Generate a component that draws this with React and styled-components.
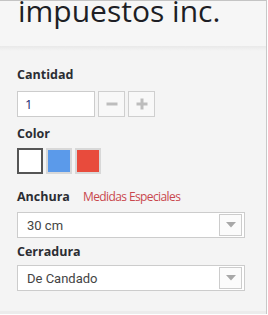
import React from 'react';
import styled, { createGlobalStyle } from 'styled-components';

const GlobalStyle = createGlobalStyle`
  body {
    margin: 0;
    background: #ffffff;
    font-family: "Open Sans", sans-serif;
  }
`;

const Sidebar = styled.aside`
  width: 266px;
  border-top: 1px solid #c4c4c4;
  border-right: 1px solid #c8c8c8;
  background-color: #f4f4f4;
`;

const Header = styled.header`
  height: 45px;
  padding-left: 18px;
  background-color: #f6f6f6;
`;

const Title = styled.h1`
  margin: 0;
  font-family: "Open Sans", sans-serif;
  font-size: 30px;
  font-weight: 400;
  line-height: 20px;
  color: #1d1e25;
  white-space: nowrap;
`;

const Panel = styled.section`
  display: flex;
  flex-direction: column;
  padding: 20px 0 20px 17px;
  background: linear-gradient(to bottom, #e9e9e9 0, #f4f4f4 5px, #f4f4f4 100%);
  border-bottom: 3px solid #ececec;
`;

const Field = styled.div`
  display: flex;
  flex-direction: column;
  margin-top: ${(p) => p.$top || 0}px;
`;

const LabelRow = styled.div`
  display: flex;
  align-items: baseline;
  gap: 13px;
  margin-bottom: ${(p) => p.$gap || 6}px;
`;

const Label = styled.label`
  font-family: "Open Sans", sans-serif;
  font-size: 12.5px;
  font-weight: 700;
  line-height: 18px;
  color: #2b2d33;
`;

const SpecialLink = styled.a`
  font-family: "Open Sans", sans-serif;
  font-size: 12px;
  letter-spacing: -0.6px;
  line-height: 18px;
  color: #c9474d;
  text-decoration: none;
`;

const QtyRow = styled.div`
  display: flex;
  gap: 3px;
`;

const QtyInput = styled.div`
  box-sizing: border-box;
  width: 78px;
  height: 26px;
  padding-left: 7px;
  border: 1px solid #cccccc;
  background: #ffffff;
  font-family: "Open Sans", sans-serif;
  font-size: 13px;
  line-height: 24px;
  color: #1b2470;
`;

const StepButton = styled.button`
  box-sizing: border-box;
  display: flex;
  align-items: center;
  justify-content: center;
  width: 27px;
  height: 26px;
  padding: 0;
  border: 1px solid #cfcfcf;
  background: #f8f8f8;
`;

const Swatches = styled.div`
  display: flex;
  gap: 3px;
`;

const Swatch = styled.span`
  box-sizing: border-box;
  width: 26px;
  height: 26px;
  border: 2px solid ${(p) => (p.$active ? '#555555' : '#d8d8d8')};
  background: ${(p) => p.$color};
`;

const SelectBox = styled.div`
  box-sizing: border-box;
  display: flex;
  align-items: center;
  justify-content: space-between;
  width: 228px;
  height: 26px;
  padding: 0 2px 0 9px;
  border: 1px solid #cccccc;
  background: #ffffff;
`;

const SelectValue = styled.span`
  font-family: Roboto, sans-serif;
  font-size: 13px;
  color: #444444;
`;

const ArrowBox = styled.span`
  box-sizing: border-box;
  display: flex;
  align-items: center;
  justify-content: center;
  width: 23px;
  height: 22px;
  border: 1px solid #cccccc;
  background: #fbfbfb;
`;

const Minus = () => (
  <svg width="12" height="12" viewBox="0 0 12 12">
    <rect x="0.5" y="4.5" width="11" height="3" fill="#bdbdbd" />
  </svg>
);

const Plus = () => (
  <svg width="12" height="12" viewBox="0 0 12 12">
    <rect x="0.5" y="4.5" width="11" height="3" fill="#bdbdbd" />
    <rect x="4.5" y="0.5" width="3" height="11" fill="#bdbdbd" />
  </svg>
);

const Caret = () => (
  <svg width="10" height="6" viewBox="0 0 10 6">
    <path d="M0 0 L10 0 L5 5.5 Z" fill="#a8a8a8" />
  </svg>
);

const Select = ({ value }) => (
  <SelectBox>
    <SelectValue>{value}</SelectValue>
    <ArrowBox>
      <Caret />
    </ArrowBox>
  </SelectBox>
);

export default function App() {
  return (
    <>
      <GlobalStyle />
      <Sidebar>
        <Header>
          <Title>impuestos inc.</Title>
        </Header>
        <Panel>
          <Field>
            <LabelRow $gap={7}>
              <Label>Cantidad</Label>
            </LabelRow>
            <QtyRow>
              <QtyInput>1</QtyInput>
              <StepButton aria-label="menos"><Minus /></StepButton>
              <StepButton aria-label="más"><Plus /></StepButton>
            </QtyRow>
          </Field>
          <Field $top={8}>
            <LabelRow $gap={5}>
              <Label>Color</Label>
            </LabelRow>
            <Swatches>
              <Swatch $active $color="#ffffff" />
              <Swatch $color="#5b9aea" />
              <Swatch $color="#e84b3c" />
            </Swatches>
          </Field>
          <Field $top={14}>
            <LabelRow $gap={6}>
              <Label>Anchura</Label>
              <SpecialLink href="#">Medidas Especiales</SpecialLink>
            </LabelRow>
            <Select value="30 cm" />
          </Field>
          <Field $top={5}>
            <LabelRow $gap={4}>
              <Label>Cerradura</Label>
            </LabelRow>
            <Select value="De Candado" />
          </Field>
        </Panel>
      </Sidebar>
    </>
  );
}
